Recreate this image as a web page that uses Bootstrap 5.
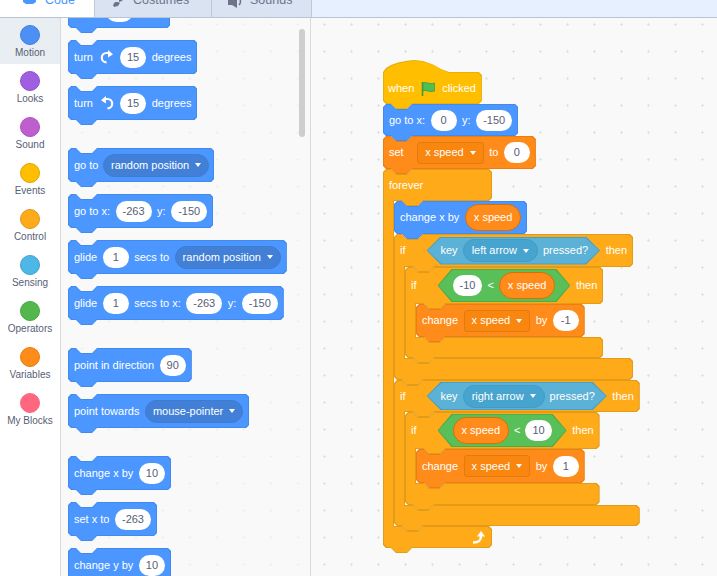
<!DOCTYPE html>
<html lang="en">
<head>
<meta charset="UTF-8">
<title>Scratch editor</title>
<link href="https://cdn.jsdelivr.net/npm/bootstrap@5.3.0/dist/css/bootstrap.min.css" rel="stylesheet">
<style>
html, body { height: 576px; overflow: hidden; }
body { font-family: "Liberation Sans", Arial, sans-serif; font-size: 11px; background: #f9f9f9; }

/* tabs */
.top-bar { height: 18px; background: #e6f0ff; border-bottom: 1px solid #b9c4d4; overflow: hidden; }
.tab-item { height: 17px; background: #d9e3f2; border-right: 1px solid #bfc9d8; font-size: 12.5px; line-height: 14px; padding-bottom: 10px; color: #6f7389; gap: 7px; }
.tab-code { width: 95px; background: #fff; color: #4c97ff; padding-left: 23px; gap: 9px; }
.tab-costumes { width: 117px; padding-left: 18px; }
.tab-sounds { width: 100px; padding-left: 16px; }
.tab-item svg { margin-bottom: -1px; flex: none; }
.tab-code svg { margin-bottom: 2px; }

/* categories */
.main-area { height: 558px; }
.cat-col { width: 61px; background: #fff; border-right: 1px solid #d9d9d9; flex: none; }
.cat-item { height: 46px; padding-top: 7px; font-size: 10px; line-height: 12px; color: #575e75; }
.cat-item.active-cat { background: #e9eef2; }
.cat-dot { width: 20px; height: 20px; border-radius: 50%; border: 1px solid; margin-bottom: 2px; }
.dot-motion { background: #4c8ff5; border-color: #3f7fdc; }
.dot-looks { background: #a05ee0; border-color: #8f50d0; }
.dot-sound { background: #bf5fcf; border-color: #ac50bc; }
.dot-events { background: #ffbf00; border-color: #dba400; }
.dot-control { background: #ffab19; border-color: #dd951a; }
.dot-sensing { background: #4db7e8; border-color: #3fa0d0; }
.dot-operators { background: #52b84e; border-color: #48a544; }
.dot-variables { background: #ff8c1a; border-color: #e57a0c; }
.dot-myblocks { background: #ff6680; border-color: #ff6680; }

/* palette */
.pal-col { width: 250px; flex: none; padding-left: 7px; background-color: #f9f9f9; background-image: radial-gradient(circle, #efefef 1px, transparent 1.3px); background-size: 27px 27px; background-position: 7.5px -7px; border-right: 1px solid #d9d9d9; overflow: hidden; position: relative; display: flex; flex-direction: column; align-items: flex-start; gap: 7px; }
.pal-col .bk { --h: 34px; margin-bottom: 0; flex: none; }
.pal-first { margin-top: -24px; }
.pal-group { margin-top: 16px; }
.pal-scroll { position: absolute; left: 238px; top: 11px; width: 6px; height: 108px; border-radius: 3px; background: #cecece; }
.turn-ico { margin-left: 2px; }

/* script canvas */
.script-area { flex: 1; overflow: hidden; padding: 42px 0 0 72px; background-color: #f9f9f9; background-image: radial-gradient(circle, #e2e2e2 1px, transparent 1.3px); background-size: 27px 27px; background-position: 0 -7px; }

/* block shape: outer box is the outline, ::before the fill */
.bk, .bk::before {
  clip-path: polygon(
    0 var(--tl), var(--tl) 0,
    calc(var(--n) - var(--o) + 8px) 0, calc(var(--n) - var(--o) + 13px) 5px,
    calc(var(--n) - var(--o) + 24px) 5px, calc(var(--n) - var(--o) + 29px) 0,
    calc(100% - 3px) 0, 100% 3px,
    100% calc(100% - 8px), calc(100% - 3px) calc(100% - 5px),
    calc(var(--b) - var(--o) + 29px) calc(100% - 5px), calc(var(--b) - var(--o) + 24px) 100%,
    calc(var(--b) - var(--o) + 13px) 100%, calc(var(--b) - var(--o) + 8px) calc(100% - 5px),
    var(--bl) calc(100% - 5px), 0 calc(100% - 5px - var(--bl)));
}
.bk {
  --n: 0px; --b: 0px; --o: 0px; --tl: 3px; --bl: 3px; --h: 33px;
  position: relative; isolation: isolate; display: flex; align-items: center; gap: 5.5px;
  width: fit-content; height: calc(var(--h) + 5px); padding: 0 6px 5px; margin-bottom: -5px;
  color: #fff; white-space: nowrap; background: var(--line);
}
.bk::before { content: ""; --o: 1px; position: absolute; inset: 1px; z-index: -1; background: var(--fill); }
.c-head { --b: 11px; --bl: 0px; }
.c-foot { --n: 11px; --tl: 0px; width: auto; }
.c-full { width: auto; }
.bk-tight { gap: 4.5px; padding-right: 5px; }
.h21 { --h: 21px; } .h22 { --h: 22px; } .h32 { --h: 32px; }
.h33 { --h: 33px; } .h34 { --h: 34px; } .h37 { --h: 37px; }

/* block colours */
.motion { --fill: #4c97ff; --line: #418bf0; }
.vars { --fill: #ff8c1a; --line: #ea7e10; }
.ctrl { --fill: #ffab19; --line: #e39b1a; }
.hat { --fill: #ffbf00; --line: #e8ae0a; }

/* hat block has a dome in place of the notch */
.hat-bk, .hat-bk::before {
  clip-path: polygon(0 12px, 3px 8px, 8px 5px, 15px 2.5px, 24px .7px, 31px 0, 40px 1px, 50px 4.5px, 58px 9px, 66px 12px,
    calc(100% - 3px) 12px, 100% 15px, 100% calc(100% - 8px), calc(100% - 3px) calc(100% - 5px),
    calc(29px - var(--o)) calc(100% - 5px), calc(24px - var(--o)) 100%, calc(13px - var(--o)) 100%, calc(8px - var(--o)) calc(100% - 5px),
    3px calc(100% - 5px), 0 calc(100% - 8px));
}
.hat-bk { height: 49px; padding-top: 12px; padding-left: 5px; gap: 7px; }

/* C shaped blocks */
.c-wrap { width: fit-content; }
.c-forever { width: 109px; }
.c-mid { display: flex; align-items: stretch; }
.c-arm { width: 11px; flex: none; margin: -1px 0; position: relative; z-index: 1; background: var(--fill); border-left: 1px solid var(--line); border-right: 1px solid var(--line); }
.c-stack { flex: none; }
.if-label { width: 21px; }

/* inputs */
.val { flex: none; min-width: 26px; height: 21px; line-height: 21px; padding: 0 7px; border-radius: 11px; background: #fff; color: #575e75; text-align: center; }
.dd { flex: none; display: flex; align-items: center; gap: 6px; height: 23px; padding: 0 7px; border-radius: 12px; border: 1px solid; }
.dd-motion { background: #4280d7; border-color: #3f7bd0; }
.dd-sense { background: #47a4ce; border-color: #429bc4; padding: 0 8px; }
.dd-var { height: 22px; border-radius: 3px; background: #f9860f; border-color: #e37a0b; }
.dd-arrow { width: 0; height: 0; border: 3.5px solid transparent; border-top: 4px solid #fff; border-bottom: 0; flex: none; }
.rep { flex: none; height: 27px; line-height: 25px; padding: 0 8px; border-radius: 14px; background: #ff8c1a; border: 1px solid #db6e00; }
.hex, .hex::before { clip-path: polygon(14px 0, calc(100% - 14px) 0, 100% 50%, calc(100% - 14px) 100%, 14px 100%, 0 50%); }
.hex { position: relative; isolation: isolate; flex: none; display: flex; align-items: center; gap: 5px; padding: 0 15px; background: var(--line); }
.hex::before { content: ""; position: absolute; inset: 1px; z-index: -1; background: var(--fill); }
.hex-sense { --fill: #5cb1d6; --line: #4a9fc6; height: 28px; padding: 0 12px 0 14px; }
.hex-op { --fill: #59c059; --line: #4cab4c; height: 33px; }
</style>
</head>
<body>

<div class="top-bar d-flex">
  <div class="tab-item tab-code d-flex align-items-end">
    <svg width="13" height="11" viewBox="0 0 13 11"><path d="M0 1h4l2 2h2l2-2h3v7l-3 2H3L0 8z" fill="#4c97ff"/></svg>
    Code
  </div>
  <div class="tab-item tab-costumes d-flex align-items-end">
    <svg width="13" height="14" viewBox="0 0 13 14"><path d="M6 0h7L9 7 6 8zM0 11l2-3 3 0 2 1-2 3-4 1z" fill="#6f7389"/></svg>
    Costumes
  </div>
  <div class="tab-item tab-sounds d-flex align-items-end">
    <svg width="15" height="14" viewBox="0 0 15 14"><path d="M0 2h4l5-2v14L4 11H0z" fill="#6f7389"/><path d="M11 4c2 2 2 5 0 7" fill="none" stroke="#6f7389" stroke-width="1.5"/></svg>
    Sounds
  </div>
</div>

<div class="main-area d-flex">
  <div class="cat-col">
    <div class="cat-item active-cat d-flex flex-column align-items-center"><div class="cat-dot dot-motion"></div>Motion</div>
    <div class="cat-item d-flex flex-column align-items-center"><div class="cat-dot dot-looks"></div>Looks</div>
    <div class="cat-item d-flex flex-column align-items-center"><div class="cat-dot dot-sound"></div>Sound</div>
    <div class="cat-item d-flex flex-column align-items-center"><div class="cat-dot dot-events"></div>Events</div>
    <div class="cat-item d-flex flex-column align-items-center"><div class="cat-dot dot-control"></div>Control</div>
    <div class="cat-item d-flex flex-column align-items-center"><div class="cat-dot dot-sensing"></div>Sensing</div>
    <div class="cat-item d-flex flex-column align-items-center"><div class="cat-dot dot-operators"></div>Operators</div>
    <div class="cat-item d-flex flex-column align-items-center"><div class="cat-dot dot-variables"></div>Variables</div>
    <div class="cat-item d-flex flex-column align-items-center"><div class="cat-dot dot-myblocks"></div>My Blocks</div>
  </div>

  <div class="pal-col">
    <div class="bk motion pal-first">move <span class="val">10</span> steps</div>
    <div class="bk motion">turn
      <svg class="turn-ico" width="14" height="14" viewBox="0 0 14 14"><path d="M6.5 12.4A4.7 4.7 0 0 1 6.5 3H8.5" fill="none" stroke="#fff" stroke-width="2.2"/><path d="M8 0L13 4.2L8 7.5Z" fill="#fff"/></svg>
      <span class="val">15</span> degrees</div>
    <div class="bk motion">turn
      <svg class="turn-ico" width="14" height="14" viewBox="0 0 14 14"><g transform="translate(14 0) scale(-1 1)"><path d="M6.5 12.4A4.7 4.7 0 0 1 6.5 3H8.5" fill="none" stroke="#fff" stroke-width="2.2"/><path d="M8 0L13 4.2L8 7.5Z" fill="#fff"/></g></svg>
      <span class="val">15</span> degrees</div>

    <div class="bk motion pal-group bk-tight">go to <span class="dd dd-motion">random position<i class="dd-arrow"></i></span></div>
    <div class="bk motion">go to x: <span class="val">-263</span> y: <span class="val">-150</span></div>
    <div class="bk motion">glide <span class="val">1</span> secs to <span class="dd dd-motion">random position<i class="dd-arrow"></i></span></div>
    <div class="bk motion">glide <span class="val">1</span> secs to x: <span class="val">-263</span> y: <span class="val">-150</span></div>

    <div class="bk motion pal-group">point in direction <span class="val">90</span></div>
    <div class="bk motion">point towards <span class="dd dd-motion">mouse-pointer<i class="dd-arrow"></i></span></div>

    <div class="bk motion pal-group">change x by <span class="val">10</span></div>
    <div class="bk motion">set x to <span class="val">-263</span></div>
    <div class="bk motion">change y by <span class="val">10</span></div>

    <div class="pal-scroll"></div>
  </div>

  <div class="script-area">
    <div class="bk hat hat-bk">when
      <svg width="14" height="15" viewBox="0 0 14 15"><path d="M1.5 1V15" stroke="#45993d" stroke-width="1.6"/><path d="M2 2C5 0 8 4 13.5 2V10C8 12 5 8 2 10Z" fill="#4cbf56" stroke="#45993d" stroke-width=".8"/></svg>
      clicked</div>
    <div class="bk motion h32">go to x: <span class="val">0</span> y: <span class="val">-150</span></div>
    <div class="bk vars h33">set <span class="dd dd-var ms-2">x speed<i class="dd-arrow"></i></span> to <span class="val">0</span></div>

    <div class="c-wrap c-forever ctrl">
      <div class="bk ctrl c-head c-full h32">forever</div>
      <div class="c-mid">
        <div class="c-arm"></div>
        <div class="c-stack">
          <div class="bk motion h33">change x by <span class="rep">x speed</span></div>

          <div class="c-wrap ctrl">
            <div class="bk ctrl c-head h33"><span class="if-label">if</span>
              <div class="hex hex-sense">key <span class="dd dd-sense">left arrow<i class="dd-arrow"></i></span> pressed?</div> then</div>
            <div class="c-mid">
              <div class="c-arm"></div>
              <div class="c-stack">
                <div class="c-wrap ctrl">
                  <div class="bk ctrl c-head h37"><span class="if-label">if</span>
                    <div class="hex hex-op"><span class="val">-10</span> &lt; <span class="rep">x speed</span></div> then</div>
                  <div class="c-mid">
                    <div class="c-arm"></div>
                    <div class="c-stack">
                      <div class="bk vars h33">change <span class="dd dd-var">x speed<i class="dd-arrow"></i></span> by <span class="val">-1</span></div>
                    </div>
                  </div>
                  <div class="bk ctrl c-foot h21"></div>
                </div>
              </div>
            </div>
            <div class="bk ctrl c-foot h22"></div>
          </div>

          <div class="c-wrap ctrl">
            <div class="bk ctrl c-head h32"><span class="if-label">if</span>
              <div class="hex hex-sense">key <span class="dd dd-sense">right arrow<i class="dd-arrow"></i></span> pressed?</div> then</div>
            <div class="c-mid">
              <div class="c-arm"></div>
              <div class="c-stack">
                <div class="c-wrap ctrl">
                  <div class="bk ctrl c-head h37"><span class="if-label">if</span>
                    <div class="hex hex-op"><span class="rep">x speed</span> &lt; <span class="val">10</span></div> then</div>
                  <div class="c-mid">
                    <div class="c-arm"></div>
                    <div class="c-stack">
                      <div class="bk vars h34">change <span class="dd dd-var">x speed<i class="dd-arrow"></i></span> by <span class="val">1</span></div>
                    </div>
                  </div>
                  <div class="bk ctrl c-foot h22"></div>
                </div>
              </div>
            </div>
            <div class="bk ctrl c-foot h21"></div>
          </div>
        </div>
      </div>
      <div class="bk ctrl c-foot h22 justify-content-end">
        <svg width="13" height="13" viewBox="0 0 13 13"><path d="M0 11.5C5 11.5 8 10 8 5" fill="none" stroke="#fff" stroke-width="2.4"/><path d="M4 5.5L8 0L12 5.5Z" fill="#fff"/></svg>
      </div>
    </div>
  </div>
</div>

<script src="https://cdn.jsdelivr.net/npm/bootstrap@5.3.0/dist/js/bootstrap.bundle.min.js"></script>
</body>
</html>
